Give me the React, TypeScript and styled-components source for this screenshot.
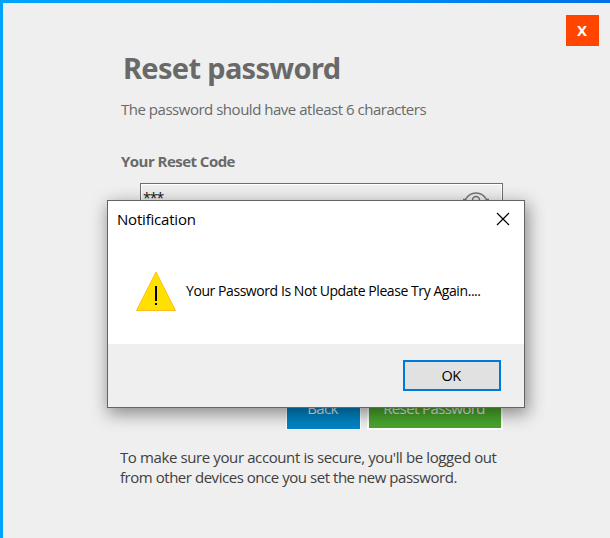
import React from "react";
import styled, { createGlobalStyle } from "styled-components";

const GlobalStyle = createGlobalStyle`
  * { box-sizing: border-box; }
  body { margin: 0; overflow: hidden; background: #efefef; }
  button { font: inherit; padding: 0; }
`;

const Window = styled.main`
  position: relative;
  width: 610px;
  height: 538px;
  padding: 3px 0 0 3px;
  background: linear-gradient(90deg, #00a2fb 0%, #009cf8 40%, #0070e8 100%);
  font-family: "Open Sans", "Noto Sans", sans-serif;
  font-size: 15px;
  overflow: hidden;
`;

const Page = styled.div`
  height: 535px;
  display: flex;
  flex-direction: column;
  background: #efefef;
`;

const TopBar = styled.header`
  display: flex;
  justify-content: flex-end;
  padding: 12px 11px 0 0;
`;

const CloseButton = styled.button`
  width: 33px;
  height: 31px;
  padding: 0 1px 1px 0;
  border: 0;
  background: #ff4500;
  color: #fff;
  font-family: "Noto Sans", sans-serif;
  font-size: 15px;
  line-height: 30px;
  font-weight: 700;
`;

const Form = styled.form`
  display: flex;
  flex-direction: column;
  padding-left: 118px;
`;

const Title = styled.h1`
  margin: 2px 0 0 2px;
  font-family: "Noto Sans", sans-serif;
  font-size: 29px;
  line-height: 40px;
  font-weight: 700;
  color: #696969;
  letter-spacing: -0.68px;
  white-space: nowrap;
`;

const Hint = styled.p`
  margin: 11px 0 0;
  line-height: 20px;
  color: #696969;
  letter-spacing: -0.48px;
  white-space: nowrap;
`;

const Label = styled.label`
  margin-top: 32px;
  line-height: 20px;
  font-weight: 700;
  color: #696969;
  letter-spacing: -0.53px;
`;

const Field = styled.div`
  display: flex;
  justify-content: space-between;
  margin: 12px 0 0 19px;
  width: 363px;
  height: 34px;
  padding: 0 12px 0 2px;
  border: 1px solid #6f6f6f;
  box-shadow: inset 0 0 0 1px #fff;
  background: #efefef;
`;

const Mask = styled.span`
  font-size: 14px;
  line-height: 28px;
  letter-spacing: -0.9px;
  color: #111;
`;

const Eye = styled.svg`
  width: 28px;
  height: 22px;
  margin-top: 6px;
`;

const Actions = styled.div`
  display: flex;
  align-items: flex-end;
  gap: 6px;
  height: 40px;
  margin: 173px 0 0 165px;
`;

const Action = styled.button<{ $tone: string; $width: number; $edge: number }>`
  width: ${(p) => p.$width}px;
  height: 40px;
  border: ${(p) => p.$edge}px solid #fff;
  padding: 0 2px 3px 0;
  background: ${(p) => p.$tone};
  color: #e4e4e4;
  font-size: 15px;
  line-height: 33px;
  letter-spacing: -0.6px;
`;

const Footnote = styled.p`
  margin: 17px 0 0 -1px;
  line-height: 20px;
  color: #404040;
  white-space: nowrap;
`;

const FootnoteLine = styled.span<{ $tracking: number }>`
  display: block;
  letter-spacing: ${(p) => p.$tracking}px;
`;

const Dialog = styled.section`
  position: absolute;
  left: 107px;
  top: 200px;
  width: 418px;
  height: 208px;
  display: flex;
  flex-direction: column;
  border: 1px solid #646464;
  background: #fff;
  color: #000;
  box-shadow: 2px 5px 16px 1px rgba(0, 0, 0, 0.42);
`;

const DialogHeader = styled.header`
  display: flex;
  justify-content: space-between;
  align-items: flex-start;
  padding: 8px 14px 0 9px;
  height: 50px;
  line-height: 20px;
  letter-spacing: -0.2px;
`;

const DialogClose = styled.svg`
  width: 14px;
  height: 14px;
  margin-top: 3px;
`;

const DialogBody = styled.div`
  flex: 1;
  display: flex;
  align-items: flex-start;
  padding: 20px 0 0 28px;
`;

const WarningIcon = styled.svg`
  width: 40px;
  height: 41px;
`;

const Message = styled.p`
  margin: 10px 0 0 10px;
  font-size: 14px;
  line-height: 20px;
  letter-spacing: -0.43px;
  white-space: nowrap;
`;

const DialogFooter = styled.footer`
  display: flex;
  justify-content: flex-end;
  align-items: flex-start;
  height: 63px;
  padding: 16px 23px 0 0;
  background: #efefef;
`;

const OkButton = styled.button`
  width: 98px;
  height: 31px;
  padding-right: 2px;
  border: 2px solid #0078d7;
  background: #e1e1e1;
  color: #000;
  font-size: 14.5px;
  letter-spacing: -0.7px;
`;

export default function App() {
  return (
    <>
      <GlobalStyle />
      <Window>
        <Page>
          <TopBar>
            <CloseButton>X</CloseButton>
          </TopBar>
          <Form onSubmit={(e) => e.preventDefault()}>
            <Title>Reset password</Title>
            <Hint>The password should have atleast 6 characters</Hint>
            <Label>Your Reset Code</Label>
            <Field>
              <Mask>***</Mask>
              <Eye viewBox="0 0 28 22" fill="none" stroke="#747474" strokeWidth="1.4">
                <path d="M1 9.5 H3.5 C6 5 10 3 14 3 C18 3 22 5 24.5 9.5 H27" />
                <path d="M3.5 9.5 C6 14 10 16 14 16 C18 16 22 14 24.5 9.5" />
                <circle cx="14" cy="10" r="3.5" />
              </Eye>
            </Field>
            <Actions>
              <Action type="button" $tone="#0084c4" $width={75} $edge={1}>Back</Action>
              <Action type="submit" $tone="#4aa52e" $width={136} $edge={2}>Reset Password</Action>
            </Actions>
            <Footnote>
              <FootnoteLine $tracking={-0.39}>
                To make sure your account is secure, you'll be logged out
              </FootnoteLine>
              <FootnoteLine $tracking={-0.46}>
                from other devices once you set the new password.
              </FootnoteLine>
            </Footnote>
          </Form>
        </Page>
        <Dialog role="alertdialog">
          <DialogHeader>
            <span>Notification</span>
            <DialogClose viewBox="0 0 14 14" stroke="#000" strokeWidth="1.2">
              <path d="M1 1 L13 13 M13 1 L1 13" />
            </DialogClose>
          </DialogHeader>
          <DialogBody>
            <WarningIcon viewBox="0 0 40 41">
              <path d="M20 1 L39.5 39.5 H0.5 Z" fill="#ffe000" stroke="#fcbe1c" strokeWidth="1" />
              <path d="M19 15 H21 V30 H19 Z M19 32 H21 V34 H19 Z" fill="#000" />
            </WarningIcon>
            <Message>Your Password Is Not Update Please Try Again....</Message>
          </DialogBody>
          <DialogFooter>
            <OkButton>OK</OkButton>
          </DialogFooter>
        </Dialog>
      </Window>
    </>
  );
}
